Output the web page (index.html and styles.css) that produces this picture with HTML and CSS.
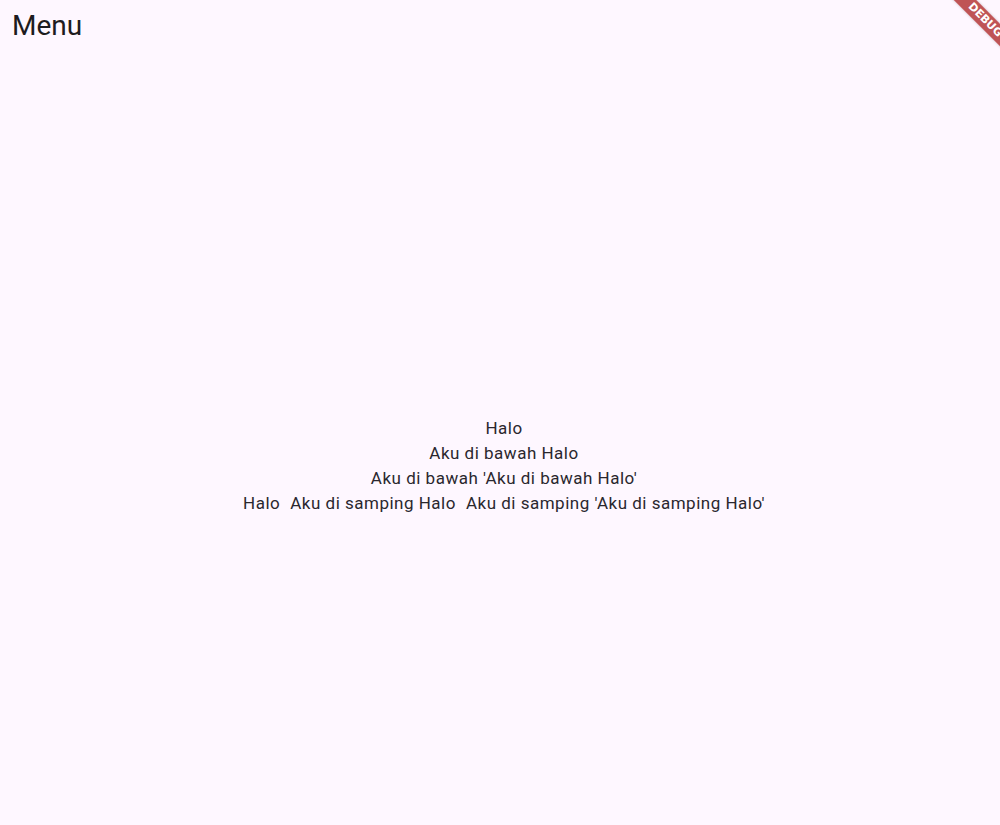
FILE: index.html
```html
<!DOCTYPE html>
<html>
<head>
<meta charset="utf-8">
<link rel="stylesheet" href="styles.css">
</head>
<body>
<div class="app">
  <header class="appbar"><h1 class="title">Menu</h1></header>
  <main class="content">
    <div class="column">
      <p class="line">Halo</p>
      <p class="line">Aku di bawah Halo</p>
      <p class="line">Aku di bawah 'Aku di bawah Halo'</p>
      <div class="row">
        <span class="line">Halo</span>
        <span class="line">Aku di samping Halo</span>
        <span class="line">Aku di samping 'Aku di samping Halo'</span>
      </div>
    </div>
  </main>
  <div class="banner">DEBUG</div>
</div>
</body>
</html>
```
FILE: styles.css
```css
html, body {
  margin: 0;
  padding: 0;
  background: #fef7ff;
}
.app {
  position: relative;
  width: 1000px;
  height: 825px;
  overflow: hidden;
  display: flex;
  flex-direction: column;
  font-family: Roboto, "Liberation Sans", sans-serif;
  color: #1d1b20;
}
.appbar {
  height: 48px;
  display: flex;
  align-items: center;
  padding-left: 12px;
  padding-top: 2px;
}
.title {
  margin: 0;
  font-size: 28px;
  font-weight: 400;
  line-height: 32px;
}
.content {
  flex: 1;
  display: flex;
  justify-content: center;
  padding-top: 366px;
  padding-left: 8px;
}
.column {
  display: flex;
  flex-direction: column;
  align-items: center;
}
.line {
  margin: 0;
  font-size: 17px;
  line-height: 25px;
  letter-spacing: 0.5px;
  white-space: nowrap;
  color: #2a272e;
}
.row {
  display: flex;
  gap: 10px;
}
.banner {
  position: absolute;
  left: 925px;
  top: 11.5px;
  width: 120px;
  height: 16px;
  transform: rotate(45deg);
  background: rgba(170, 30, 30, 0.75);
  color: #fff;
  font-family: "DejaVu Sans", sans-serif;
  font-weight: 700;
  font-size: 11px;
  line-height: 16px;
  text-align: center;
  box-shadow: 0 0 3px rgba(0,0,0,0.2);
}
```
